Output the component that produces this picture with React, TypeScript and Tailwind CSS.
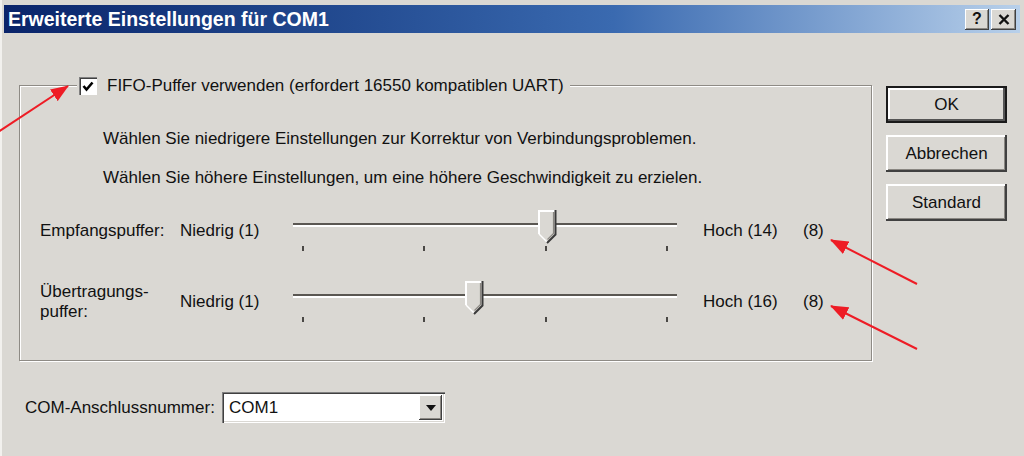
import React from "react";

function Thumb() {
  return (
    <svg width="20" height="34" viewBox="0 0 20 34" className="block">
      <polygon points="0,0 18,0 18,24 9,33 0,24" fill="#dad8d3" />
      <polyline points="1,24 1,1 17,1" fill="none" stroke="#ffffff" strokeWidth="2" />
      <polyline points="1,24 9,32" fill="none" stroke="#ffffff" strokeWidth="1.5" />
      <polyline points="17.5,0 17.5,24.5 9,33" fill="none" stroke="#3a3a3a" strokeWidth="2" />
      <polyline points="15.5,2 15.5,23.5 9.5,29.5" fill="none" stroke="#8a8782" strokeWidth="1.2" />
    </svg>
  );
}

function Slider({ thumbClass }: { thumbClass: string }) {
  return (
    <div className="relative w-[384px] h-[42px] shrink-0">
      <div className="h-[13px]" />
      <div className="h-[2px] bg-[#5a5752]" />
      <div className="h-[2px] bg-white" />
      <div className="mt-[19px] flex justify-between px-[9px]">
        <div className="w-[2px] h-[5px] bg-[#4a4845]" />
        <div className="w-[2px] h-[5px] bg-[#4a4845]" />
        <div className="w-[2px] h-[5px] bg-[#4a4845]" />
        <div className="w-[2px] h-[5px] bg-[#4a4845]" />
      </div>
      <div className={"absolute top-0 " + thumbClass}>
        <Thumb />
      </div>
    </div>
  );
}

function Btn({ label, def }: { label: string; def?: boolean }) {
  return (
    <div
      className={
        "w-[121px] h-[37px] flex items-center justify-center text-[17px] text-[#111] " +
        (def
          ? "border-2 border-[#1a1a1a] shadow-[inset_-2px_-2px_0_#555,inset_2px_2px_0_#ffffff]"
          : "shadow-[inset_-2px_-2px_0_#404040,inset_2px_2px_0_#ffffff,inset_-3px_-3px_0_#8a8782]")
      }
    >
      {label}
    </div>
  );
}

export default function App() {
  return (
    <div className="relative w-[1024px] h-[456px] overflow-hidden bg-[#dad8d3] text-[#111] [font-family:'Liberation_Sans',Arial,sans-serif] shadow-[inset_2px_0_0_#f2f1ee]">
      {/* Title bar */}
      <div className="mt-[5px] mx-[4px] h-[28px] flex items-center justify-between bg-gradient-to-r from-[#0a246a] via-[#3a6ab0] via-60% to-[#b8d0ea] pl-[4px] pr-[4px]">
        <div className="text-white font-bold text-[19.5px] leading-[20px]">Erweiterte Einstellungen für COM1</div>
        <div className="flex gap-[2px]">
          <div className="w-[24px] h-[21px] bg-[#dad8d3] flex items-center justify-center font-bold text-[16px] leading-none shadow-[inset_-1px_-1px_0_#404040,inset_1px_1px_0_#ffffff,inset_-2px_-2px_0_#8a8782]">
            ?
          </div>
          <div className="w-[25px] h-[21px] bg-[#dad8d3] flex items-center justify-center shadow-[inset_-1px_-1px_0_#404040,inset_1px_1px_0_#ffffff,inset_-2px_-2px_0_#8a8782]">
            <svg width="12" height="11" viewBox="0 0 12 11">
              <path d="M1.5 1 L10.5 10 M10.5 1 L1.5 10" stroke="#111" strokeWidth="2.4" />
            </svg>
          </div>
        </div>
      </div>

      {/* Body */}
      <div className="flex">
        <div className="pl-[19px] pt-[52px]">
          {/* Group box */}
          <div className="relative w-[853px] h-[276px] border border-[#8e8b85] shadow-[1px_1px_0_#ffffff,inset_1px_1px_0_#ffffff] text-[17px] leading-[20px]">
            <div className="absolute left-[57px] -top-[10px] flex items-center bg-[#dad8d3] pl-[2px] pr-[6px]">
              <div className="w-[18px] h-[18px] bg-white flex items-center justify-center shadow-[inset_1px_1px_0_#808080,inset_2px_2px_0_#404040,inset_-1px_-1px_0_#ffffff]">
                <svg width="12" height="11" viewBox="0 0 12 11">
                  <path d="M1.5 5 L4.5 8.5 L10.5 1.5" fill="none" stroke="#000" strokeWidth="2.6" />
                </svg>
              </div>
              <div className="ml-[10px]">FIFO-Puffer verwenden (erfordert 16550 kompatiblen UART)</div>
            </div>

            <div className="pl-[83px] pt-[43px]">Wählen Sie niedrigere Einstellungen zur Korrektur von Verbindungsproblemen.</div>
            <div className="pl-[83px] mt-[19px]">Wählen Sie höhere Einstellungen, um eine höhere Geschwindigkeit zu erzielen.</div>

            <div className="mt-[22px] flex items-center h-[42px] pl-[20px]">
              <div className="w-[140px]">Empfangspuffer:</div>
              <div className="w-[113px]">Niedrig (1)</div>
              <Slider thumbClass="left-[245px]" />
              <div className="ml-[26px] w-[100px]">Hoch (14)</div>
              <div>(8)</div>
            </div>

            <div className="mt-[29px] flex items-center h-[42px] pl-[20px]">
              <div className="w-[140px]">
                <div>Übertragungs-</div>
                <div>puffer:</div>
              </div>
              <div className="w-[113px]">Niedrig (1)</div>
              <Slider thumbClass="left-[172px]" />
              <div className="ml-[26px] w-[100px]">Hoch (16)</div>
              <div>(8)</div>
            </div>
          </div>

          {/* COM row */}
          <div className="mt-[31px] ml-[6px] flex items-center text-[17px] leading-[20px]">
            <div className="w-[197px]">COM-Anschlussnummer:</div>
            <div className="w-[223px] h-[31px] bg-white flex items-center justify-between pl-[7px] pr-[3px] shadow-[inset_1px_1px_0_#808080,inset_2px_2px_0_#404040,inset_-1px_-1px_0_#ffffff,inset_-2px_-2px_0_#dad8d3]">
              <span>COM1</span>
              <div className="w-[23px] h-[25px] bg-[#dad8d3] flex items-center justify-center shadow-[inset_-1px_-1px_0_#404040,inset_1px_1px_0_#ffffff,inset_-2px_-2px_0_#8a8782]">
                <svg width="10" height="6" viewBox="0 0 10 6">
                  <path d="M0 0 L10 0 L5 6 Z" fill="#111" />
                </svg>
              </div>
            </div>
          </div>
        </div>

        {/* Buttons */}
        <div className="ml-[14px] pt-[53px] flex flex-col gap-[12px]">
          <Btn label="OK" def />
          <Btn label="Abbrechen" />
          <Btn label="Standard" />
        </div>
      </div>

      {/* Red arrows overlay */}
      <svg className="absolute inset-0 pointer-events-none" width="1024" height="456" viewBox="0 0 1024 456">
        <defs>
          <marker id="ah" markerUnits="userSpaceOnUse" markerWidth="18" markerHeight="14" viewBox="0 0 18 14" refX="17" refY="7" orient="auto">
            <path d="M0 0 L18 7 L0 14 Z" fill="#ee1c25" />
          </marker>
        </defs>
        <line x1="-2" y1="132" x2="68" y2="86" stroke="#ee1c25" strokeWidth="2" markerEnd="url(#ah)" />
        <line x1="917" y1="284" x2="831" y2="240" stroke="#ee1c25" strokeWidth="2" markerEnd="url(#ah)" />
        <line x1="917" y1="349" x2="831" y2="306" stroke="#ee1c25" strokeWidth="2" markerEnd="url(#ah)" />
      </svg>
    </div>
  );
}
